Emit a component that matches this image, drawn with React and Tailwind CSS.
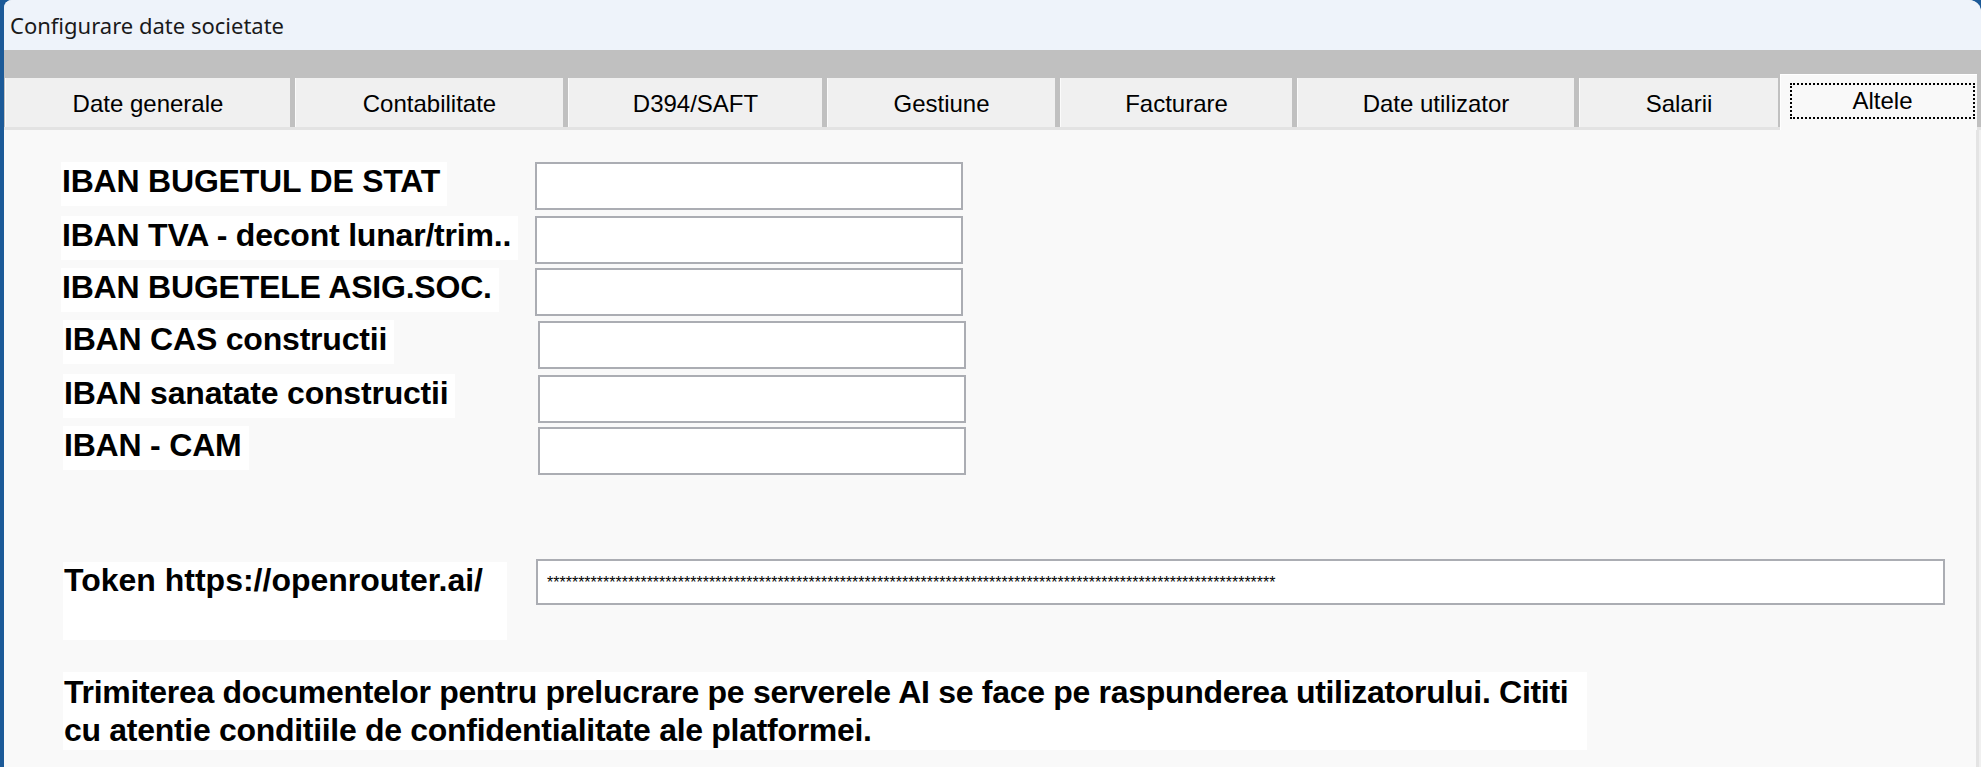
import React from 'react';

// Config dialog: "Altele" page of the company settings window
const tabs = [
  { name: 'Date generale', w: 'w-[285px]' },
  { name: 'Contabilitate', w: 'w-[268px]' },
  { name: 'D394/SAFT', w: 'w-[254px]' },
  { name: 'Gestiune', w: 'w-[228px]' },
  { name: 'Facturare', w: 'w-[232px]' },
  { name: 'Date utilizator', w: 'w-[277px]' },
  { name: 'Salarii', w: 'w-[199px]' },
];

const ibanRows = [
  { label: 'IBAN BUGETUL DE STAT', mt: 'mt-0', shift: false },
  { label: 'IBAN TVA - decont lunar/trim..', mt: 'mt-[6px]', shift: false },
  { label: 'IBAN BUGETELE ASIG.SOC.', mt: 'mt-[4px]', shift: false },
  { label: 'IBAN CAS constructii', mt: 'mt-[4px]', shift: true },
  { label: 'IBAN sanatate constructii', mt: 'mt-[5px]', shift: true },
  { label: 'IBAN - CAM', mt: 'mt-[3px]', shift: true },
];

const TOKEN_MASK = '*'.repeat(117);

function TabBar() {
  return (
    <div className="h-[80px] bg-[#c0c0c0] border-b-[3px] border-[#e3e3e3] flex items-end gap-[5px] pl-px">
      {tabs.map((t) => (
        <div
          key={t.name}
          className={`${t.w} h-[49px] shrink-0 bg-[#f0f0f0] border-l border-[#fbfbfb] flex items-center justify-center pt-[3px] text-[24px] text-black`}
        >
          {t.name}
        </div>
      ))}
      <div className="relative z-10 -ml-[3px] -mb-[3px] w-[197px] h-[56px] shrink-0 bg-[#f9f9f9] border-l border-t border-white pl-[9px] pr-[2px] pt-[8px] pb-[11px]">
        <div className="h-full border-2 border-dotted border-black flex items-center justify-center text-[24px] text-black">
          Altele
        </div>
      </div>
    </div>
  );
}

function IbanRow({ label, mt, shift }) {
  return (
    <div className={`flex ${mt} ${shift ? 'ml-[2px]' : ''}`}>
      <div className="w-[474px] shrink-0">
        <div className="inline-block h-[44px] bg-white pl-px pr-[7px] leading-[38px] whitespace-pre tracking-[-0.2px] font-bold text-[32px] text-black">
          {label}
        </div>
      </div>
      <div
        className={`w-[428px] h-[48px] bg-white border-2 border-[#abadb3] ${shift ? 'ml-px mt-px' : ''}`}
      />
    </div>
  );
}

export default function App() {
  return (
    <div className="w-[1981px] h-[767px] bg-[#1c5a98] pl-[4px] font-['Liberation_Sans',Arial,sans-serif] overflow-hidden">
      <div className="h-full rounded-tl-[8px] rounded-tr-[12px] overflow-hidden bg-[#f0f0f0] flex flex-col">
        <div className="h-[50px] shrink-0 bg-[#eef3fa] flex items-center pl-[6px] text-[22px] text-[#1a1a1a] font-['Noto_Sans',sans-serif]">
          Configurare date societate
        </div>

        <TabBar />

        <div className="flex-1 mr-[2px] bg-[#f9f9f9] border-r-[3px] border-[#e4e4e4] pl-[57px] pt-[32px]">
          {ibanRows.map((r) => (
            <IbanRow key={r.label} {...r} />
          ))}

          <div className="flex mt-[84px] ml-[2px]">
            <div className="w-[473px] shrink-0">
              <div className="mt-[3px] w-[444px] h-[78px] bg-white pl-px leading-[36px] font-bold text-[32px] text-black">
                Token https://openrouter.ai/
              </div>
            </div>
            <div className="w-[1409px] h-[46px] bg-white border-2 border-[#abadb3] pl-[9px] pt-[14px] text-[16px] leading-[16px] text-black overflow-hidden whitespace-nowrap">
              {TOKEN_MASK}
            </div>
          </div>

          <div className="mt-[32px] ml-[2px] w-[1524px] h-[78px] bg-white pl-px pt-px leading-[38px] font-bold text-[32px] text-black whitespace-nowrap tracking-[-0.3px]">
            Trimiterea documentelor pentru prelucrare pe serverele AI se face pe raspunderea utilizatorului. Cititi
            <br />
            cu atentie conditiile de confidentialitate ale platformei.
          </div>
        </div>
      </div>
    </div>
  );
}
